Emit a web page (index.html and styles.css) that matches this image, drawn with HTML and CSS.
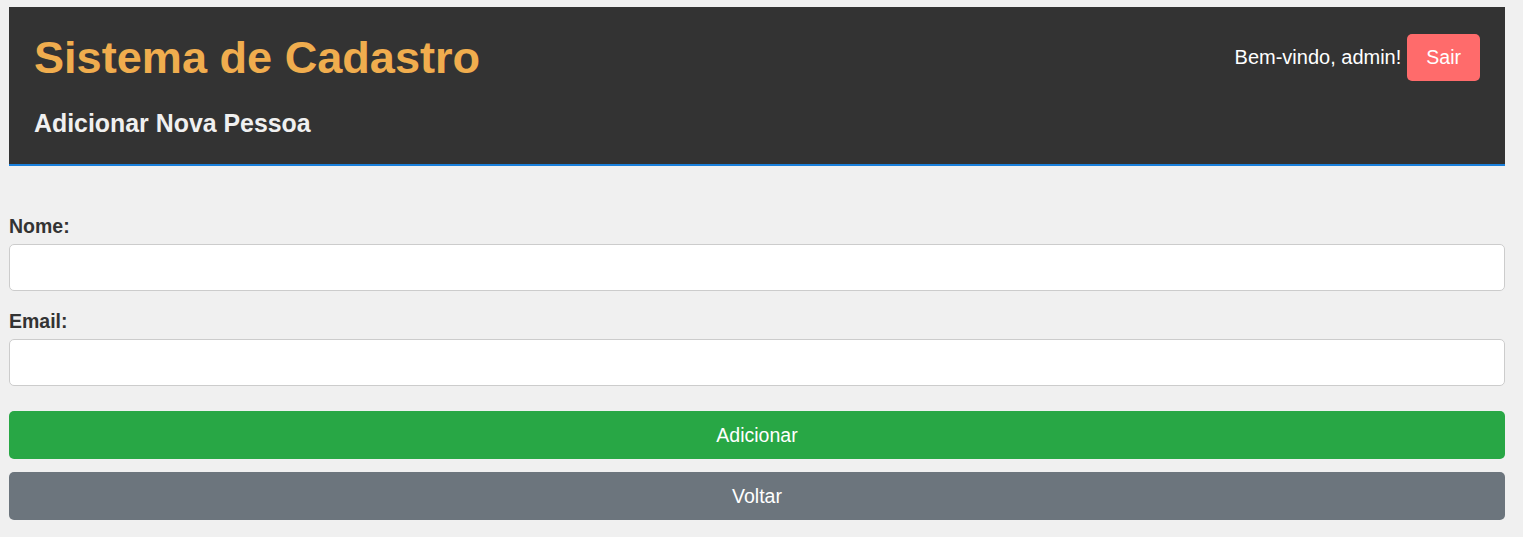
FILE: index.html
```html
<!DOCTYPE html>
<html lang="pt-BR">
<head>
<meta charset="utf-8">
<title>Sistema de Cadastro</title>
<link rel="stylesheet" href="styles.css">
</head>
<body>
<header class="header">
  <div class="header-top">
    <h1 class="title">Sistema de Cadastro</h1>
    <div class="user">
      <span class="welcome">Bem-vindo, admin!</span>
      <button class="btn-logout">Sair</button>
    </div>
  </div>
  <h2 class="subtitle">Adicionar Nova Pessoa</h2>
</header>
<main class="content">
  <form class="form">
    <label class="label" for="nome">Nome:</label>
    <input class="input" id="nome" type="text">
    <label class="label label-next" for="email">Email:</label>
    <input class="input" id="email" type="email">
    <button type="button" class="btn btn-add">Adicionar</button>
    <button type="button" class="btn btn-back">Voltar</button>
  </form>
</main>
</body>
</html>
```
FILE: styles.css
```css
html, body {
  background: #f0f0f0;
}
body {
  margin: 7px 18px 0 9px;
  font-family: "Liberation Sans", Arial, sans-serif;
  color: #333;
}
.header {
  background: #333333;
  padding: 25px 25px 27px 25px;
  border-bottom: 2px solid #1a80dc;
}
.header-top {
  display: flex;
  align-items: center;
  justify-content: space-between;
}
.title {
  margin: 0;
  font-size: 45.1px;
  font-weight: bold;
  line-height: 1.15;
  color: #f0ad4e;
}
.user {
  display: flex;
  align-items: center;
  gap: 6px;
}
.welcome {
  font-size: 20px;
  color: #ffffff;
}
.btn-logout {
  font-family: inherit;
  font-size: 19.5px;
  line-height: 23px;
  color: #fff;
  background: #ff6b6b;
  border: none;
  border-radius: 5px;
  height: 47px;
  padding: 0 19px;
}
.subtitle {
  margin: 25px 0 0 0;
  font-size: 24.9px;
  font-weight: bold;
  line-height: 1.15;
  color: #f0f0f0;
}
.content {
  padding-top: 49px;
}
.form {
  display: flex;
  flex-direction: column;
}
.label {
  font-size: 19.5px;
  font-weight: bold;
  color: #333;
  margin-bottom: 7px;
  line-height: 22px;
}
.label-next {
  margin-top: 19px;
}
.input {
  box-sizing: border-box;
  height: 47px;
  width: 100%;
  margin: 0;
  border: 1px solid #cccccc;
  border-radius: 5px;
  background: #fff;
  font-family: inherit;
  font-size: 19px;
  padding: 0 10px;
}
.btn {
  box-sizing: border-box;
  width: 100%;
  height: 48px;
  border: none;
  border-radius: 5px;
  color: #fff;
  font-family: inherit;
  font-size: 19.5px;
  margin: 0;
}
.btn-add {
  margin-top: 25px;
  background: #28a745;
}
.btn-back {
  margin-top: 13px;
  background: #6c757d;
}
```
